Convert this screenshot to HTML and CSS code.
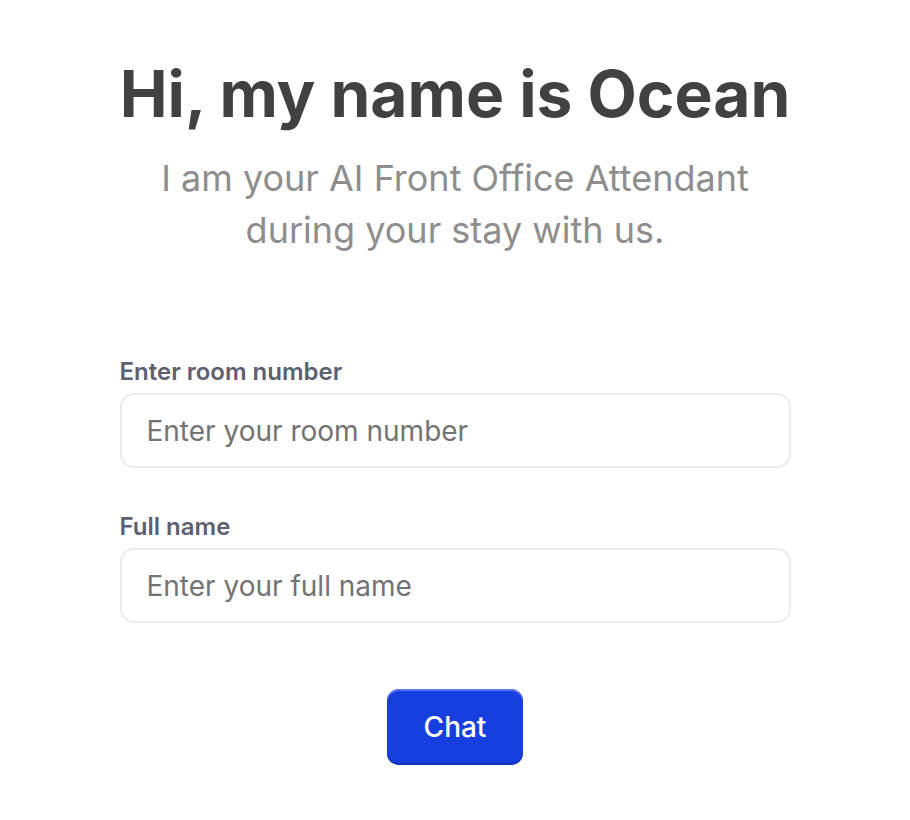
FILE: index.html
```html
<!DOCTYPE html>
<html>
<head>
<meta charset="utf-8">
<link rel="stylesheet" href="styles.css">
</head>
<body>
<main class="page">
  <h1 class="title">Hi, my name is Ocean</h1>
  <p class="subtitle">I am your AI Front Office Attendant<br>during your stay with us.</p>
  <form class="form">
    <label class="field">
      <span class="label">Enter room number</span>
      <input class="input" type="text" placeholder="Enter your room number">
    </label>
    <label class="field">
      <span class="label">Full name</span>
      <input class="input" type="text" placeholder="Enter your full name">
    </label>
    <div class="actions">
      <button class="btn" type="button">Chat</button>
    </div>
  </form>
</main>
</body>
</html>
```
FILE: styles.css
```css
* { box-sizing: border-box; }
html, body { margin: 0; padding: 0; background: #fff; }
body { font-family: "Inter", "Noto Sans", sans-serif; }
.page {
  width: 671px;
  margin: 0 auto;
  padding-top: 56px;
  display: flex;
  flex-direction: column;
  align-items: center;
}
.title {
  margin: 0;
  font-size: 64px;
  line-height: 76px;
  font-weight: 700;
  color: #414141;
  text-align: center;
}
.subtitle {
  margin: 20px 0 0;
  font-size: 36px;
  line-height: 52px;
  font-weight: 400;
  color: #8e8e8e;
  text-align: center;
}
.form {
  width: 100%;
  margin-top: 101px;
  display: flex;
  flex-direction: column;
  gap: 44px;
}
.field {
  display: flex;
  flex-direction: column;
  gap: 6px;
}
.label {
  font-size: 24px;
  line-height: 30px;
  font-weight: 600;
  color: #5e5f70;
}
.input {
  width: 100%;
  height: 75px;
  border: 2px solid #ececec;
  border-radius: 14px;
  padding: 0 25px;
  font-family: inherit;
  font-size: 28px;
  color: #333;
  background: #fff;
  outline: none;
}
.input::placeholder { color: #737373; }
.actions {
  display: flex;
  justify-content: center;
  margin-top: 22px;
}
.btn {
  width: 136px;
  height: 76px;
  border: none;
  border-radius: 12px;
  background: #173fe0;
  color: #fff;
  font-family: inherit;
  font-size: 28px;
  font-weight: 500;
  box-shadow: inset 0 2px 0 #5b77ea, inset 0 -2px 0 #1232b8;
}
```
